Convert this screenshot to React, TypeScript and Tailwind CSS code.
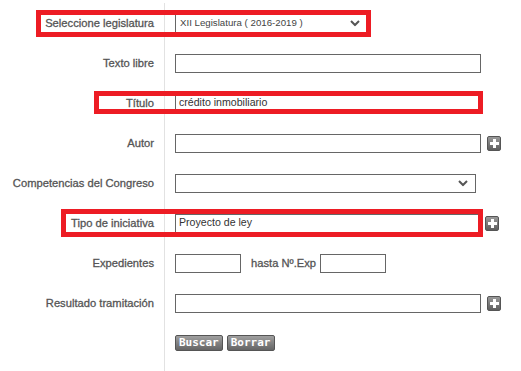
import React from 'react';

const labelCls = 'w-[165px] shrink-0 pr-[10px] text-right text-[11.2px] text-[#555] [-webkit-text-stroke:0.3px_#555] border-r border-[#e2e2e2] h-full flex items-center justify-end';

const PlusBtn: React.FC = () => (
  <span className="ml-[6px] w-[14px] h-[15px] rounded-[2px] bg-gradient-to-b from-[#9a9a9a] to-[#5f5f5f] border border-[#555] flex items-center justify-center">
    <svg width="9" height="9" viewBox="0 0 9 9">
      <rect x="3" y="0" width="3" height="9" fill="#fff" />
      <rect x="0" y="3" width="9" height="3" fill="#fff" />
    </svg>
  </span>
);

const Chevron: React.FC = () => (
  <svg width="10" height="7" viewBox="0 0 10 7" className="absolute right-[7px] top-1/2 -translate-y-1/2">
    <path d="M1 1.5 L5 5.5 L9 1.5" stroke="#555" strokeWidth="2" fill="none" />
  </svg>
);

const Row: React.FC<{ label: string; children?: React.ReactNode }> = ({ label, children }) => (
  <div className="h-[40px] flex items-center">
    <div className={labelCls}>{label}</div>
    <div className="pl-[10px] flex items-center">{children}</div>
  </div>
);

const inputCls = 'h-[19px] border border-[#666] bg-white px-[3px] text-[10.6px] text-[#333] flex items-center';

const SmallBtn: React.FC<{ text: string }> = ({ text }) => (
  <span className="h-[16px] px-[3px] rounded-[2px] border border-[#555] bg-gradient-to-b from-[#a0a0a0] to-[#656565] text-white text-[11px] font-bold flex items-center" style={{ fontFamily: '"DejaVu Sans Mono", monospace' }}>
    {text}
  </span>
);

export default function App() {
  return (
    <div className="relative w-[521px] h-[371px] bg-white overflow-hidden" style={{ fontFamily: '"Liberation Sans", Arial, sans-serif' }}>
      <div className="pt-[3px]">
        <Row label="Seleccione legislatura">
          <div className="relative w-[192px] h-[19px] border-l border-[#666] text-[9.7px] text-[#444] pl-[4px] flex items-center">
            XII Legislatura ( 2016-2019 )
            <Chevron />
          </div>
        </Row>
        <Row label="Texto libre">
          <div className={`${inputCls} w-[306px]`} />
        </Row>
        <Row label="Título">
          <div className={`${inputCls} w-[306px]`}>crédito inmobiliario</div>
        </Row>
        <Row label="Autor">
          <div className={`${inputCls} w-[306px]`} />
          <PlusBtn />
        </Row>
        <Row label="Competencias del Congreso">
          <div className={`${inputCls} relative w-[301px]`}>
            <Chevron />
          </div>
        </Row>
        <Row label="Tipo de iniciativa">
          <div className={`${inputCls} w-[304px]`}>Proyecto de ley</div>
          <PlusBtn />
        </Row>
        <Row label="Expedientes">
          <div className={`${inputCls} w-[66px]`} />
          <span className="ml-[10px] mr-[4px] text-[11.2px] text-[#555] [-webkit-text-stroke:0.3px_#555]">hasta Nº.Exp</span>
          <div className={`${inputCls} w-[66px]`} />
        </Row>
        <Row label="Resultado tramitación">
          <div className={`${inputCls} w-[306px]`} />
          <PlusBtn />
        </Row>
        <Row label="">
          <div className="flex gap-[4px]">
            <SmallBtn text="Buscar" />
            <SmallBtn text="Borrar" />
          </div>
        </Row>
        <div className="h-[20px] w-[165px] border-r border-[#e2e2e2]" />
      </div>

      {/* annotation boxes */}
      <div className="absolute left-[36px] top-[10px] w-[335px] h-[27px] border-[5px] border-[#ed1c24] pointer-events-none" />
      <div className="absolute left-[94px] top-[91px] w-[389px] h-[23px] border-[5px] border-[#ed1c24] pointer-events-none" />
      <div className="absolute left-[61px] top-[209px] w-[422px] h-[28px] border-[5px] border-[#ed1c24] pointer-events-none" />
    </div>
  );
}
